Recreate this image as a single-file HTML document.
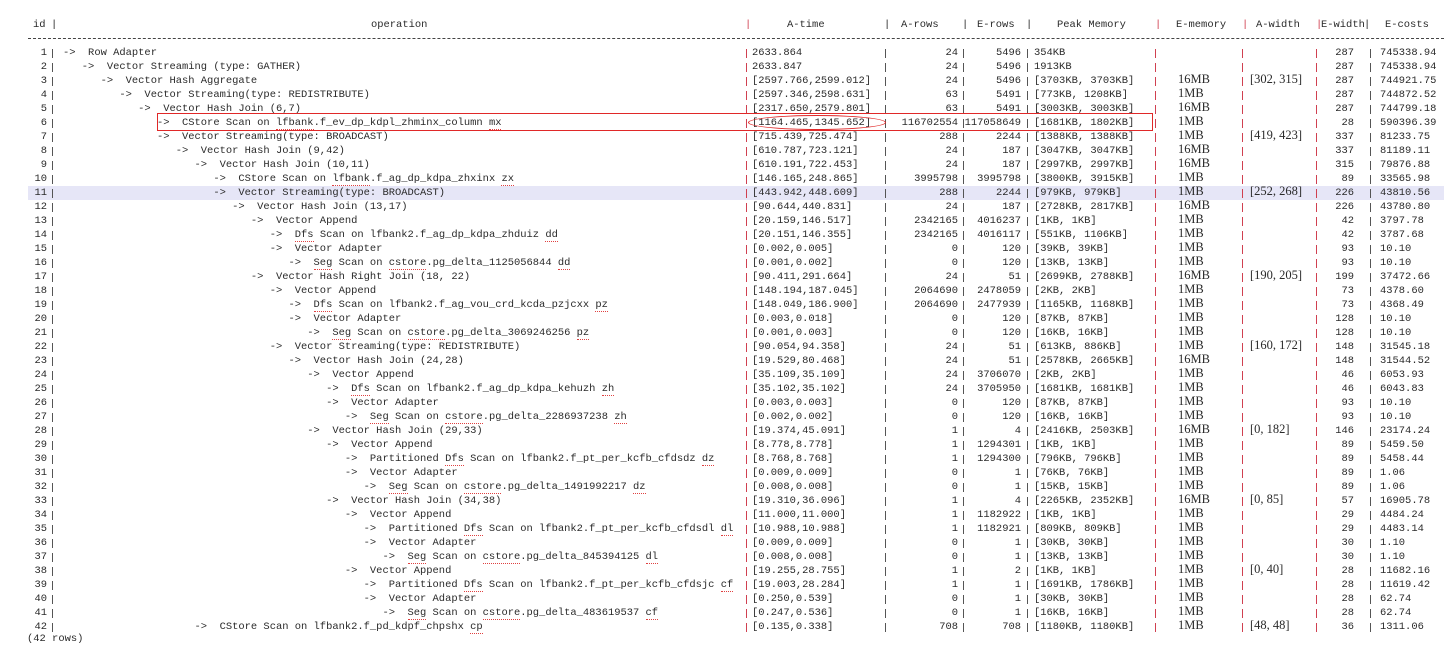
<!DOCTYPE html>
<html><head><meta charset="utf-8"><style>
body{margin:0;width:1444px;height:646px;background:#fff;position:relative;overflow:hidden;font-family:"Liberation Mono",monospace;font-size:10.45px;color:#2a2a2a}
#w{position:absolute;left:0;top:2px;width:1444px;height:644px}
.r{position:absolute;left:0;width:1444px;height:14px;line-height:14px}
.r>span{position:absolute;top:0;white-space:pre}
.i{left:0;width:47px;text-align:right}
.o{left:63px}
.t{left:752px}
.a{left:858px;width:100px;text-align:right}
.e{left:921px;width:100px;text-align:right}
.p{left:1034px}
.r>span.m{left:1178px;top:-2px;font-family:"Liberation Serif",serif;font-size:12.5px;line-height:14px}
.r>span.w{left:1250px;top:-2px;font-family:"Liberation Serif",serif;font-size:12.5px;line-height:14px}
.x{left:1254px;width:100px;text-align:right}
.c{left:1380px}
u.q{text-decoration:none;border-bottom:1px dotted #e04040}
.pipe{position:absolute;top:44px;width:1px;height:588px;background:repeating-linear-gradient(to bottom,transparent 0 3px,var(--c) 3px 12px,transparent 12px 14px)}
.hl{position:absolute;left:28px;top:184px;width:1416px;height:14px;background:#e6e6f7}
</style></head><body><div id="w">
<div class="hl"></div>
<div class="r" style="top:16px">
<span style="left:33px">id</span><span style="left:51px">|</span><span style="left:371px">operation</span><span style="left:745px;color:#d04050">|</span><span style="left:787px">A-time</span><span style="left:884px">|</span><span style="left:901px">A-rows</span><span style="left:962px">|</span><span style="left:977px">E-rows</span><span style="left:1026px">|</span><span style="left:1057px">Peak Memory</span><span style="left:1155px;color:#d04050">|</span><span style="left:1176px">E-memory</span><span style="left:1242px;color:#d04050">|</span><span style="left:1256px">A-width</span><span style="left:1316px;color:#d04050">|</span><span style="left:1321px">E-width</span><span style="left:1364px">|</span><span style="left:1385px">E-costs</span>
</div>
<div style="position:absolute;left:28px;top:36px;width:1416px;border-top:1px dashed #444"></div>
<div class="pipe" style="left:52px;--c:#555"></div>
<div class="pipe" style="left:746px;--c:#d04050"></div>
<div class="pipe" style="left:885px;--c:#555"></div>
<div class="pipe" style="left:963px;--c:#555"></div>
<div class="pipe" style="left:1027px;--c:#555"></div>
<div class="pipe" style="left:1155px;--c:#d04050"></div>
<div class="pipe" style="left:1242px;--c:#d04050"></div>
<div class="pipe" style="left:1316px;--c:#d04050"></div>
<div class="pipe" style="left:1370px;--c:#555"></div>

<div class="r" style="top:44px"><span class="i">1</span><span class="o">-&gt;  Row Adapter</span><span class="t">2633.864</span><span class="a">24</span><span class="e">5496</span><span class="p">354KB</span><span class="x">287</span><span class="c">745338.94</span></div>
<div class="r" style="top:58px"><span class="i">2</span><span class="o">   -&gt;  Vector Streaming (type: GATHER)</span><span class="t">2633.847</span><span class="a">24</span><span class="e">5496</span><span class="p">1913KB</span><span class="x">287</span><span class="c">745338.94</span></div>
<div class="r" style="top:72px"><span class="i">3</span><span class="o">      -&gt;  Vector Hash Aggregate</span><span class="t">[2597.766,2599.012]</span><span class="a">24</span><span class="e">5496</span><span class="p">[3703KB, 3703KB]</span><span class="m">16MB</span><span class="w">[302, 315]</span><span class="x">287</span><span class="c">744921.75</span></div>
<div class="r" style="top:86px"><span class="i">4</span><span class="o">         -&gt;  Vector Streaming(type: REDISTRIBUTE)</span><span class="t">[2597.346,2598.631]</span><span class="a">63</span><span class="e">5491</span><span class="p">[773KB, 1208KB]</span><span class="m">1MB</span><span class="x">287</span><span class="c">744872.52</span></div>
<div class="r" style="top:100px"><span class="i">5</span><span class="o">            -&gt;  Vector Hash Join (6,7)</span><span class="t">[2317.650,2579.801]</span><span class="a">63</span><span class="e">5491</span><span class="p">[3003KB, 3003KB]</span><span class="m">16MB</span><span class="x">287</span><span class="c">744799.18</span></div>
<div class="r" style="top:114px"><span class="i">6</span><span class="o">               -&gt;  CStore Scan on <u class="q">lfbank</u>.f_ev_dp_kdpl_zhminx_column <u class="q">mx</u></span><span class="t">[1164.465,1345.652]</span><span class="a">116702554</span><span class="e">117058649</span><span class="p">[1681KB, 1802KB]</span><span class="m">1MB</span><span class="x">28</span><span class="c">590396.39</span></div>
<div class="r" style="top:128px"><span class="i">7</span><span class="o">               -&gt;  Vector Streaming(type: BROADCAST)</span><span class="t">[715.439,725.474]</span><span class="a">288</span><span class="e">2244</span><span class="p">[1388KB, 1388KB]</span><span class="m">1MB</span><span class="w">[419, 423]</span><span class="x">337</span><span class="c">81233.75</span></div>
<div class="r" style="top:142px"><span class="i">8</span><span class="o">                  -&gt;  Vector Hash Join (9,42)</span><span class="t">[610.787,723.121]</span><span class="a">24</span><span class="e">187</span><span class="p">[3047KB, 3047KB]</span><span class="m">16MB</span><span class="x">337</span><span class="c">81189.11</span></div>
<div class="r" style="top:156px"><span class="i">9</span><span class="o">                     -&gt;  Vector Hash Join (10,11)</span><span class="t">[610.191,722.453]</span><span class="a">24</span><span class="e">187</span><span class="p">[2997KB, 2997KB]</span><span class="m">16MB</span><span class="x">315</span><span class="c">79876.88</span></div>
<div class="r" style="top:170px"><span class="i">10</span><span class="o">                        -&gt;  CStore Scan on <u class="q">lfbank</u>.f_ag_dp_kdpa_zhxinx <u class="q">zx</u></span><span class="t">[146.165,248.865]</span><span class="a">3995798</span><span class="e">3995798</span><span class="p">[3800KB, 3915KB]</span><span class="m">1MB</span><span class="x">89</span><span class="c">33565.98</span></div>
<div class="r" style="top:184px"><span class="i">11</span><span class="o">                        -&gt;  Vector Streaming(type: BROADCAST)</span><span class="t">[443.942,448.609]</span><span class="a">288</span><span class="e">2244</span><span class="p">[979KB, 979KB]</span><span class="m">1MB</span><span class="w">[252, 268]</span><span class="x">226</span><span class="c">43810.56</span></div>
<div class="r" style="top:198px"><span class="i">12</span><span class="o">                           -&gt;  Vector Hash Join (13,17)</span><span class="t">[90.644,440.831]</span><span class="a">24</span><span class="e">187</span><span class="p">[2728KB, 2817KB]</span><span class="m">16MB</span><span class="x">226</span><span class="c">43780.80</span></div>
<div class="r" style="top:212px"><span class="i">13</span><span class="o">                              -&gt;  Vector Append</span><span class="t">[20.159,146.517]</span><span class="a">2342165</span><span class="e">4016237</span><span class="p">[1KB, 1KB]</span><span class="m">1MB</span><span class="x">42</span><span class="c">3797.78</span></div>
<div class="r" style="top:226px"><span class="i">14</span><span class="o">                                 -&gt;  <u class="q">Dfs</u> Scan on lfbank2.f_ag_dp_kdpa_zhduiz <u class="q">dd</u></span><span class="t">[20.151,146.355]</span><span class="a">2342165</span><span class="e">4016117</span><span class="p">[551KB, 1106KB]</span><span class="m">1MB</span><span class="x">42</span><span class="c">3787.68</span></div>
<div class="r" style="top:240px"><span class="i">15</span><span class="o">                                 -&gt;  Vector Adapter</span><span class="t">[0.002,0.005]</span><span class="a">0</span><span class="e">120</span><span class="p">[39KB, 39KB]</span><span class="m">1MB</span><span class="x">93</span><span class="c">10.10</span></div>
<div class="r" style="top:254px"><span class="i">16</span><span class="o">                                    -&gt;  <u class="q">Seg</u> Scan on <u class="q">cstore</u>.pg_delta_1125056844 <u class="q">dd</u></span><span class="t">[0.001,0.002]</span><span class="a">0</span><span class="e">120</span><span class="p">[13KB, 13KB]</span><span class="m">1MB</span><span class="x">93</span><span class="c">10.10</span></div>
<div class="r" style="top:268px"><span class="i">17</span><span class="o">                              -&gt;  Vector Hash Right Join (18, 22)</span><span class="t">[90.411,291.664]</span><span class="a">24</span><span class="e">51</span><span class="p">[2699KB, 2788KB]</span><span class="m">16MB</span><span class="w">[190, 205]</span><span class="x">199</span><span class="c">37472.66</span></div>
<div class="r" style="top:282px"><span class="i">18</span><span class="o">                                 -&gt;  Vector Append</span><span class="t">[148.194,187.045]</span><span class="a">2064690</span><span class="e">2478059</span><span class="p">[2KB, 2KB]</span><span class="m">1MB</span><span class="x">73</span><span class="c">4378.60</span></div>
<div class="r" style="top:296px"><span class="i">19</span><span class="o">                                    -&gt;  <u class="q">Dfs</u> Scan on lfbank2.f_ag_vou_crd_kcda_pzjcxx <u class="q">pz</u></span><span class="t">[148.049,186.900]</span><span class="a">2064690</span><span class="e">2477939</span><span class="p">[1165KB, 1168KB]</span><span class="m">1MB</span><span class="x">73</span><span class="c">4368.49</span></div>
<div class="r" style="top:310px"><span class="i">20</span><span class="o">                                    -&gt;  Vector Adapter</span><span class="t">[0.003,0.018]</span><span class="a">0</span><span class="e">120</span><span class="p">[87KB, 87KB]</span><span class="m">1MB</span><span class="x">128</span><span class="c">10.10</span></div>
<div class="r" style="top:324px"><span class="i">21</span><span class="o">                                       -&gt;  <u class="q">Seg</u> Scan on <u class="q">cstore</u>.pg_delta_3069246256 <u class="q">pz</u></span><span class="t">[0.001,0.003]</span><span class="a">0</span><span class="e">120</span><span class="p">[16KB, 16KB]</span><span class="m">1MB</span><span class="x">128</span><span class="c">10.10</span></div>
<div class="r" style="top:338px"><span class="i">22</span><span class="o">                                 -&gt;  Vector Streaming(type: REDISTRIBUTE)</span><span class="t">[90.054,94.358]</span><span class="a">24</span><span class="e">51</span><span class="p">[613KB, 886KB]</span><span class="m">1MB</span><span class="w">[160, 172]</span><span class="x">148</span><span class="c">31545.18</span></div>
<div class="r" style="top:352px"><span class="i">23</span><span class="o">                                    -&gt;  Vector Hash Join (24,28)</span><span class="t">[19.529,80.468]</span><span class="a">24</span><span class="e">51</span><span class="p">[2578KB, 2665KB]</span><span class="m">16MB</span><span class="x">148</span><span class="c">31544.52</span></div>
<div class="r" style="top:366px"><span class="i">24</span><span class="o">                                       -&gt;  Vector Append</span><span class="t">[35.109,35.109]</span><span class="a">24</span><span class="e">3706070</span><span class="p">[2KB, 2KB]</span><span class="m">1MB</span><span class="x">46</span><span class="c">6053.93</span></div>
<div class="r" style="top:380px"><span class="i">25</span><span class="o">                                          -&gt;  <u class="q">Dfs</u> Scan on lfbank2.f_ag_dp_kdpa_kehuzh <u class="q">zh</u></span><span class="t">[35.102,35.102]</span><span class="a">24</span><span class="e">3705950</span><span class="p">[1681KB, 1681KB]</span><span class="m">1MB</span><span class="x">46</span><span class="c">6043.83</span></div>
<div class="r" style="top:394px"><span class="i">26</span><span class="o">                                          -&gt;  Vector Adapter</span><span class="t">[0.003,0.003]</span><span class="a">0</span><span class="e">120</span><span class="p">[87KB, 87KB]</span><span class="m">1MB</span><span class="x">93</span><span class="c">10.10</span></div>
<div class="r" style="top:408px"><span class="i">27</span><span class="o">                                             -&gt;  <u class="q">Seg</u> Scan on <u class="q">cstore</u>.pg_delta_2286937238 <u class="q">zh</u></span><span class="t">[0.002,0.002]</span><span class="a">0</span><span class="e">120</span><span class="p">[16KB, 16KB]</span><span class="m">1MB</span><span class="x">93</span><span class="c">10.10</span></div>
<div class="r" style="top:422px"><span class="i">28</span><span class="o">                                       -&gt;  Vector Hash Join (29,33)</span><span class="t">[19.374,45.091]</span><span class="a">1</span><span class="e">4</span><span class="p">[2416KB, 2503KB]</span><span class="m">16MB</span><span class="w">[0, 182]</span><span class="x">146</span><span class="c">23174.24</span></div>
<div class="r" style="top:436px"><span class="i">29</span><span class="o">                                          -&gt;  Vector Append</span><span class="t">[8.778,8.778]</span><span class="a">1</span><span class="e">1294301</span><span class="p">[1KB, 1KB]</span><span class="m">1MB</span><span class="x">89</span><span class="c">5459.50</span></div>
<div class="r" style="top:450px"><span class="i">30</span><span class="o">                                             -&gt;  Partitioned <u class="q">Dfs</u> Scan on lfbank2.f_pt_per_kcfb_cfdsdz <u class="q">dz</u></span><span class="t">[8.768,8.768]</span><span class="a">1</span><span class="e">1294300</span><span class="p">[796KB, 796KB]</span><span class="m">1MB</span><span class="x">89</span><span class="c">5458.44</span></div>
<div class="r" style="top:464px"><span class="i">31</span><span class="o">                                             -&gt;  Vector Adapter</span><span class="t">[0.009,0.009]</span><span class="a">0</span><span class="e">1</span><span class="p">[76KB, 76KB]</span><span class="m">1MB</span><span class="x">89</span><span class="c">1.06</span></div>
<div class="r" style="top:478px"><span class="i">32</span><span class="o">                                                -&gt;  <u class="q">Seg</u> Scan on <u class="q">cstore</u>.pg_delta_1491992217 <u class="q">dz</u></span><span class="t">[0.008,0.008]</span><span class="a">0</span><span class="e">1</span><span class="p">[15KB, 15KB]</span><span class="m">1MB</span><span class="x">89</span><span class="c">1.06</span></div>
<div class="r" style="top:492px"><span class="i">33</span><span class="o">                                          -&gt;  Vector Hash Join (34,38)</span><span class="t">[19.310,36.096]</span><span class="a">1</span><span class="e">4</span><span class="p">[2265KB, 2352KB]</span><span class="m">16MB</span><span class="w">[0, 85]</span><span class="x">57</span><span class="c">16905.78</span></div>
<div class="r" style="top:506px"><span class="i">34</span><span class="o">                                             -&gt;  Vector Append</span><span class="t">[11.000,11.000]</span><span class="a">1</span><span class="e">1182922</span><span class="p">[1KB, 1KB]</span><span class="m">1MB</span><span class="x">29</span><span class="c">4484.24</span></div>
<div class="r" style="top:520px"><span class="i">35</span><span class="o">                                                -&gt;  Partitioned <u class="q">Dfs</u> Scan on lfbank2.f_pt_per_kcfb_cfdsdl <u class="q">dl</u></span><span class="t">[10.988,10.988]</span><span class="a">1</span><span class="e">1182921</span><span class="p">[809KB, 809KB]</span><span class="m">1MB</span><span class="x">29</span><span class="c">4483.14</span></div>
<div class="r" style="top:534px"><span class="i">36</span><span class="o">                                                -&gt;  Vector Adapter</span><span class="t">[0.009,0.009]</span><span class="a">0</span><span class="e">1</span><span class="p">[30KB, 30KB]</span><span class="m">1MB</span><span class="x">30</span><span class="c">1.10</span></div>
<div class="r" style="top:548px"><span class="i">37</span><span class="o">                                                   -&gt;  <u class="q">Seg</u> Scan on <u class="q">cstore</u>.pg_delta_845394125 <u class="q">dl</u></span><span class="t">[0.008,0.008]</span><span class="a">0</span><span class="e">1</span><span class="p">[13KB, 13KB]</span><span class="m">1MB</span><span class="x">30</span><span class="c">1.10</span></div>
<div class="r" style="top:562px"><span class="i">38</span><span class="o">                                             -&gt;  Vector Append</span><span class="t">[19.255,28.755]</span><span class="a">1</span><span class="e">2</span><span class="p">[1KB, 1KB]</span><span class="m">1MB</span><span class="w">[0, 40]</span><span class="x">28</span><span class="c">11682.16</span></div>
<div class="r" style="top:576px"><span class="i">39</span><span class="o">                                                -&gt;  Partitioned <u class="q">Dfs</u> Scan on lfbank2.f_pt_per_kcfb_cfdsjc <u class="q">cf</u></span><span class="t">[19.003,28.284]</span><span class="a">1</span><span class="e">1</span><span class="p">[1691KB, 1786KB]</span><span class="m">1MB</span><span class="x">28</span><span class="c">11619.42</span></div>
<div class="r" style="top:590px"><span class="i">40</span><span class="o">                                                -&gt;  Vector Adapter</span><span class="t">[0.250,0.539]</span><span class="a">0</span><span class="e">1</span><span class="p">[30KB, 30KB]</span><span class="m">1MB</span><span class="x">28</span><span class="c">62.74</span></div>
<div class="r" style="top:604px"><span class="i">41</span><span class="o">                                                   -&gt;  <u class="q">Seg</u> Scan on <u class="q">cstore</u>.pg_delta_483619537 <u class="q">cf</u></span><span class="t">[0.247,0.536]</span><span class="a">0</span><span class="e">1</span><span class="p">[16KB, 16KB]</span><span class="m">1MB</span><span class="x">28</span><span class="c">62.74</span></div>
<div class="r" style="top:618px"><span class="i">42</span><span class="o">                     -&gt;  CStore Scan on lfbank2.f_pd_kdpf_chpshx <u class="q">cp</u></span><span class="t">[0.135,0.338]</span><span class="a">708</span><span class="e">708</span><span class="p">[1180KB, 1180KB]</span><span class="m">1MB</span><span class="w">[48, 48]</span><span class="x">36</span><span class="c">1311.06</span></div>
<div class="r" style="top:630px"><span style="left:27px">(42 rows)</span></div>

<div style="position:absolute;left:157px;top:111px;width:994px;height:16px;border:1.5px solid #e02828"></div>
<div style="position:absolute;left:748px;top:113px;width:136px;height:13px;border:1px solid #e02828;border-radius:50%"></div>
</div></body></html>
